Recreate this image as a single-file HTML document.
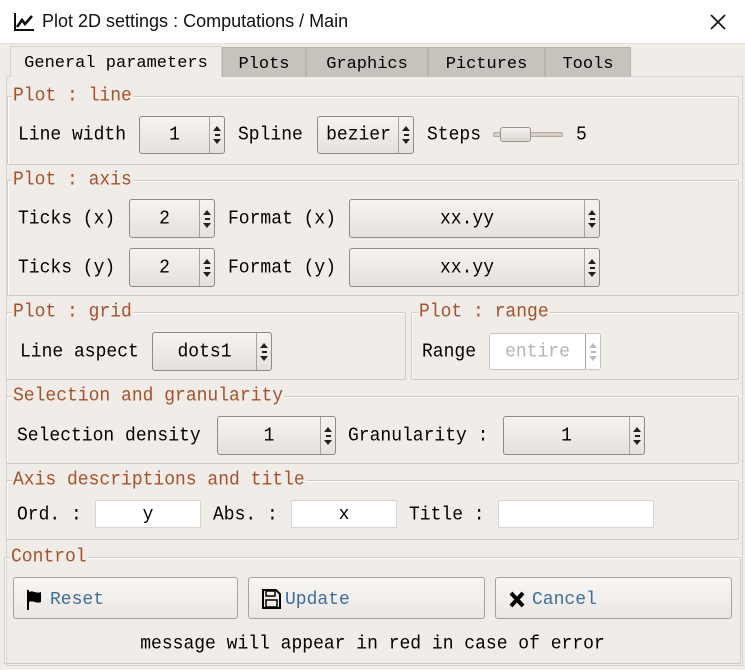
<!DOCTYPE html>
<html><head><meta charset="utf-8"><style>
*{box-sizing:border-box;margin:0;padding:0}
body{width:745px;height:670px;background:#f0ece8;font-family:"Liberation Mono","DejaVu Sans Mono",monospace;font-size:18px;color:#000;position:relative;overflow:hidden}
.a{position:absolute}
.title{left:0;top:0;width:745px;height:44px;background:#fff;border-bottom:1px solid #e4e0dc}
.tt{left:42px;top:11px;font-family:"Liberation Sans",sans-serif;font-size:18px;color:#111}
.tab{top:47px;height:30px;background:#c8c2bc;border:1px solid #b9b3ad;border-bottom:none;text-align:center;line-height:33px;font-size:17px}
.tab.act{background:#f0ece8;border-color:#d6d1cc;top:46px;height:31px}
.grp{border:1px solid #d0cbc5;border-radius:2px;box-shadow:inset 1px 1px 0 #fff}
.leg{color:#a6512a;background:#f0ece8;padding:0 1px;line-height:18px;font-size:18px;transform:scaleY(1.1)}
.lbl{line-height:20px;transform:scaleY(1.1);transform-origin:0 50%}
.sp{border:1px solid #8f8a85;border-radius:3px;background:linear-gradient(#f6f3f0,#e6e1dc);text-align:center}
.sp .v{position:absolute;left:0;right:15px;top:50%;transform:translateY(-50%) scaleY(1.1);line-height:20px}
.sp .ar{position:absolute;right:0;top:0;bottom:0;width:15px;border-left:1px solid #a9a39e}
.ar:before{content:"";position:absolute;left:3px;top:calc(50% - 9px);border:4px solid transparent;border-bottom:5px solid #222;border-top:none}
.ar:after{content:"";position:absolute;left:3px;top:calc(50% + 4px);border:4px solid transparent;border-top:5px solid #222;border-bottom:none}
.ar i{position:absolute;left:5px;top:calc(50% - 1px);width:5px;height:2px;background:#222}
.dis{background:#fff;border-color:#c9c4bf;color:#b8b3ae}
.dis .ar:before{border-bottom-color:#bbb}.dis .ar:after{border-top-color:#bbb}.dis .ar i{background:#bbb}
.in{background:#fff;border:1px solid #d8d4d0;text-align:center;line-height:28px}
.btn{border:1px solid #a8a29c;border-radius:3px;background:linear-gradient(#f8f6f4,#ebe7e3);height:42px;top:577px;color:#3d6e9a;line-height:44px;padding-left:36px}
.btn svg{position:absolute;left:12px;top:11px}
</style></head><body>
<div class="a title"></div>
<svg class="a" style="left:13px;top:12px" width="22" height="20" viewBox="0 0 22 20"><path d="M2 1V18H21" stroke="#111" stroke-width="2" fill="none"/><path d="M4 15L9 8L12 12L19 4" stroke="#111" stroke-width="2.6" fill="none"/></svg>
<div class="a tt">Plot 2D settings : Computations / Main</div>
<svg class="a" style="left:709px;top:13px" width="18" height="18"><path d="M2 2L16 16M16 2L2 16" stroke="#111" stroke-width="1.6"/></svg>
<div class="a" style="left:6px;top:76px;width:737px;height:590px;border:1px solid #d6d1cc"></div>

<div class="a tab act" style="left:10px;width:212px">General parameters</div>
<div class="a tab" style="left:222px;width:84px">Plots</div>
<div class="a tab" style="left:306px;width:122px">Graphics</div>
<div class="a tab" style="left:428px;width:117px">Pictures</div>
<div class="a tab" style="left:545px;width:86px">Tools</div>

<div class="a grp" style="left:7px;top:96px;width:732px;height:69px"></div>
<div class="a leg" style="left:12px;top:87px">Plot : line</div>
<div class="a lbl" style="left:18px;top:125px">Line width</div>
<div class="a sp" style="left:139px;top:116px;width:86px;height:38px"><span class="v">1</span><span class="ar"><i></i></span></div>
<div class="a lbl" style="left:238px;top:125px">Spline</div>
<div class="a sp" style="left:317px;top:116px;width:97px;height:38px"><span class="v" style="right:14px">bezier</span><span class="ar"><i></i></span></div>
<div class="a lbl" style="left:427px;top:125px">Steps</div>
<div class="a" style="left:493px;top:132px;width:70px;height:5px;background:#d8cfc6;border:1px solid #b3a99f;border-radius:2px"></div>
<div class="a" style="left:500px;top:127px;width:31px;height:15px;background:linear-gradient(#f4f1ee,#ddd7d1);border:1px solid #9b948d;border-radius:3px"></div>
<div class="a lbl" style="left:576px;top:125px">5</div>

<div class="a grp" style="left:7px;top:180px;width:732px;height:116px"></div>
<div class="a leg" style="left:12px;top:171px">Plot : axis</div>
<div class="a lbl" style="left:18px;top:209px">Ticks (x)</div>
<div class="a sp" style="left:129px;top:199px;width:86px;height:39px"><span class="v">2</span><span class="ar"><i></i></span></div>
<div class="a lbl" style="left:228px;top:209px">Format (x)</div>
<div class="a sp" style="left:349px;top:199px;width:251px;height:39px"><span class="v">xx.yy</span><span class="ar"><i></i></span></div>
<div class="a lbl" style="left:18px;top:258px">Ticks (y)</div>
<div class="a sp" style="left:129px;top:248px;width:86px;height:39px"><span class="v">2</span><span class="ar"><i></i></span></div>
<div class="a lbl" style="left:228px;top:258px">Format (y)</div>
<div class="a sp" style="left:349px;top:248px;width:251px;height:39px"><span class="v">xx.yy</span><span class="ar"><i></i></span></div>

<div class="a grp" style="left:6px;top:312px;width:400px;height:68px"></div>
<div class="a leg" style="left:12px;top:303px">Plot : grid</div>
<div class="a lbl" style="left:20px;top:342px">Line aspect</div>
<div class="a sp" style="left:152px;top:332px;width:120px;height:39px"><span class="v">dots1</span><span class="ar"><i></i></span></div>
<div class="a grp" style="left:411px;top:312px;width:328px;height:68px"></div>
<div class="a leg" style="left:418px;top:303px">Plot : range</div>
<div class="a lbl" style="left:422px;top:342px">Range</div>
<div class="a sp dis" style="left:489px;top:333px;width:112px;height:37px"><span class="v">entire</span><span class="ar"><i></i></span></div>

<div class="a grp" style="left:6px;top:396px;width:733px;height:68px"></div>
<div class="a leg" style="left:12px;top:387px">Selection and granularity</div>
<div class="a lbl" style="left:17px;top:426px">Selection density</div>
<div class="a sp" style="left:217px;top:416px;width:119px;height:39px"><span class="v">1</span><span class="ar"><i></i></span></div>
<div class="a lbl" style="left:348px;top:426px">Granularity :</div>
<div class="a sp" style="left:503px;top:416px;width:142px;height:39px"><span class="v">1</span><span class="ar"><i></i></span></div>

<div class="a grp" style="left:6px;top:480px;width:733px;height:60px"></div>
<div class="a leg" style="left:12px;top:471px">Axis descriptions and title</div>
<div class="a lbl" style="left:17px;top:505px">Ord. :</div>
<div class="a in" style="left:95px;top:500px;width:106px;height:28px">y</div>
<div class="a lbl" style="left:213px;top:505px">Abs. :</div>
<div class="a in" style="left:291px;top:500px;width:106px;height:28px">x</div>
<div class="a lbl" style="left:409px;top:505px">Title :</div>
<div class="a in" style="left:498px;top:500px;width:156px;height:28px"></div>

<div class="a grp" style="left:4px;top:557px;width:737px;height:107px"></div>
<div class="a leg" style="left:10px;top:548px">Control</div>
<div class="a btn" style="left:13px;width:225px"><svg width="22" height="22" viewBox="0 0 22 22"><path d="M2 1V21" stroke="#000" stroke-width="2"/><path d="M3 3C7 1 10 5 15 3V13C10 15 7 11 3 13Z" fill="#000"/></svg>Reset</div>
<div class="a btn" style="left:248px;width:237px"><svg width="20" height="20" viewBox="0 0 20 20"><path d="M2 1H15L19 5V19H2Z" fill="none" stroke="#000" stroke-width="2"/><rect x="5" y="2" width="9" height="5" fill="none" stroke="#000" stroke-width="1.5"/><rect x="5" y="11" width="11" height="7" fill="none" stroke="#000" stroke-width="1.5"/></svg>Update</div>
<div class="a btn" style="left:495px;width:237px"><svg width="18" height="20" viewBox="0 0 18 20"><path d="M3 4L15 17M15 4L3 17" stroke="#000" stroke-width="4"/></svg>Cancel</div>
<div class="a lbl" style="left:0;width:745px;top:634px;text-align:center;transform-origin:50% 50%">message will appear in red in case of error</div>
</body></html>
